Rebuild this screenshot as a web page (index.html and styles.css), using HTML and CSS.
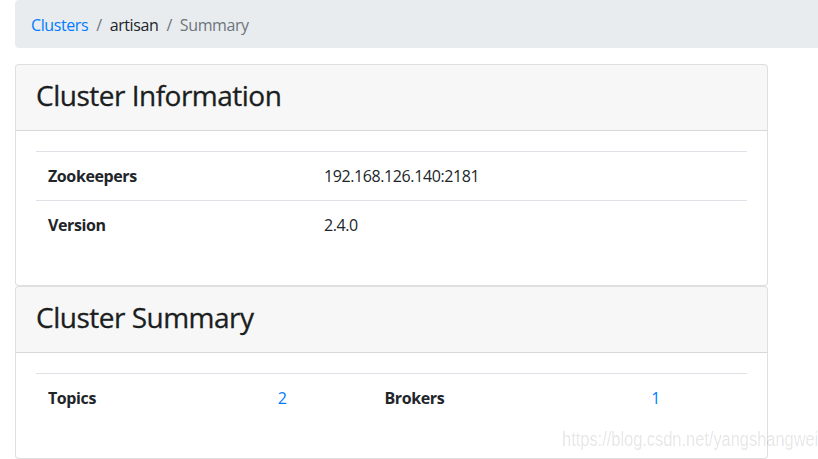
FILE: index.html
```html
<!DOCTYPE html>
<html lang="en">
<head>
<meta charset="utf-8">
<title>Summary</title>
<link rel="stylesheet" href="styles.css">
</head>
<body>
<div class="page">
  <nav class="breadcrumb">
    <a class="crumb-link" href="#">Clusters</a>
    <span class="sep">/</span>
    <span class="crumb">artisan</span>
    <span class="sep">/</span>
    <span class="crumb active">Summary</span>
  </nav>

  <div class="card">
    <div class="card-header"><h3 class="card-title">Cluster Information</h3></div>
    <div class="card-body">
      <table class="table">
        <tr>
          <th class="col-info-label">Zookeepers</th>
          <td>192.168.126.140:2181</td>
        </tr>
        <tr>
          <th class="col-info-label">Version</th>
          <td>2.4.0</td>
        </tr>
      </table>
    </div>
  </div>

  <div class="card">
    <div class="card-header"><h3 class="card-title">Cluster Summary</h3></div>
    <div class="card-body">
      <table class="table">
        <tr>
          <th class="col-a">Topics</th>
          <td class="col-b"><a href="#">2</a></td>
          <th class="col-c">Brokers</th>
          <td class="col-d"><a href="#">1</a></td>
        </tr>
      </table>
    </div>
  </div>
</div>
<div class="watermark">https://blog.csdn.net/yangshangwei</div>
</body>
</html>
```

FILE: styles.css
```css
* { box-sizing: border-box; }

html, body {
  margin: 0;
  padding: 0;
  background: #fff;
}

body {
  font-family: "Open Sans", "Noto Sans", sans-serif;
  font-size: 16px;
  line-height: 1.5;
  letter-spacing: -0.4px;
  color: #212529;
  position: relative;
  width: 818px;
  height: 459px;
  overflow: hidden;
}

a {
  color: #007bff;
  text-decoration: none;
}

.page {
  padding-left: 15px;
}

.breadcrumb {
  display: flex;
  align-items: center;
  height: 48px;
  padding: 13px 16px 11px;
  margin-bottom: 16px;
  background: #e9ecef;
  border-radius: 4px 0 0 4px;
}

.sep {
  color: #6c757d;
  padding: 0 8px;
}

.crumb.active {
  color: #6c757d;
}

.card {
  width: 753px;
  border: 1px solid rgba(0, 0, 0, 0.125);
  border-radius: 4px;
  background: #fff;
}

.card-header {
  padding: 14px 20px 12px;
  background: rgba(0, 0, 0, 0.03);
  border-bottom: 1px solid rgba(0, 0, 0, 0.125);
  border-radius: 3px 3px 0 0;
}

.card-title {
  margin: 0 0 6px;
  font-size: 28px;
  font-weight: 500;
  line-height: 33px;
  letter-spacing: -0.5px;
  color: #1b1e21;
  -webkit-text-stroke: 0.3px #1b1e21;
}

.card-body {
  padding: 20px;
}

.table {
  width: 100%;
  margin-bottom: 16px;
  border-collapse: collapse;
}

.table th,
.table td {
  padding: 12px;
  border-top: 1px solid #dee2e6;
  text-align: left;
  vertical-align: top;
  line-height: 24px;
}

.table th {
  font-weight: 700;
}

.col-info-label { width: 276px; }
.col-a { width: 230px; }
.col-b { width: 107px; }
.col-c { width: 267px; }
.col-d { width: 108px; }

.watermark {
  position: absolute;
  right: 0;
  bottom: 9px;
  font-family: "Liberation Sans", Arial, sans-serif;
  font-size: 20.5px;
  line-height: 22px;
  letter-spacing: 0;
  color: rgba(0, 0, 0, 0.11);
  transform: scaleX(0.8);
  transform-origin: right center;
  white-space: nowrap;
  pointer-events: none;
}
```
